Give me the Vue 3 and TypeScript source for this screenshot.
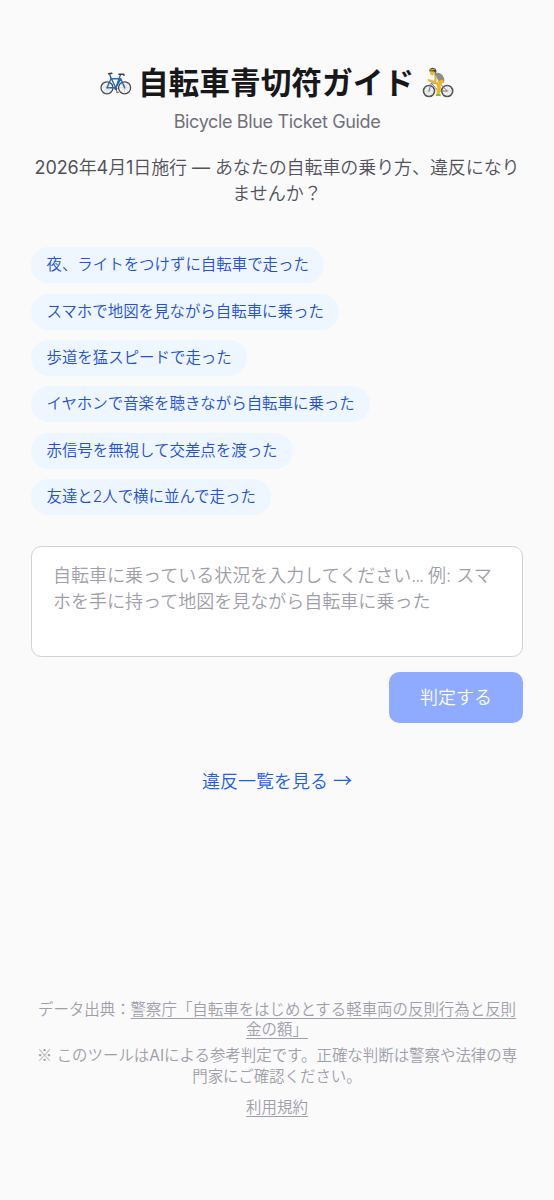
<script setup lang="ts">
const examples: string[] = [
  '夜、ライトをつけずに自転車で走った',
  'スマホで地図を見ながら自転車に乗った',
  '歩道を猛スピードで走った',
  'イヤホンで音楽を聴きながら自転車に乗った',
  '赤信号を無視して交差点を渡った',
  '友達と2人で横に並んで走った',
]
</script>

<template>
  <main class="page">
    <header class="header">
      <h1 class="title">
        <svg class="bike" viewBox="0 0 32 32" fill="none" stroke-linecap="round" stroke-linejoin="round">
          <g stroke="#44484c" stroke-width="1.3">
            <circle cx="7" cy="20.8" r="6" />
            <circle cx="24.6" cy="20.8" r="6" />
          </g>
          <g stroke="#b4b7bb" stroke-width=".5">
            <path d="M7 15.5v10.6M1.7 20.8h10.6M3.3 17l7.4 7.6M3.3 24.6l7.4-7.6M24.6 15.5v10.6M19.3 20.8h10.6M20.9 17l7.4 7.6M20.9 24.6l7.4-7.6" />
          </g>
          <path d="M7 20.8l4-9h9.8L15.8 21 10.6 10M7 20.8h8.8l4.8-13.2M9.8 7.4l1.2 4.4M20.8 11.8l3.8 9" stroke="#2868bd" stroke-width="1.4" />
          <path d="M8.8 6.8l3-.6M19 7.2h4.4l.6 1" stroke="#393d45" stroke-width="1.6" />
          <circle cx="15.8" cy="21.6" r="1.6" fill="#555b62" />
          <path d="M15.8 21.6l1.4 3.6M16.6 25.4h1.8" stroke="#444" stroke-width=".8" />
        </svg>
        <span class="title-text">自転車青切符ガイド</span>
        <svg class="bike" viewBox="0 0 32 32" fill="none" stroke-linecap="round" stroke-linejoin="round">
          <g stroke="#505255" stroke-width="1.6">
            <circle cx="7" cy="24" r="5.5" />
            <circle cx="25.2" cy="24" r="5.5" />
          </g>
          <path d="M7 19v10M2 24h10M3.5 20.5l7 7M3.5 27.5l7-7M25.2 19v10M20.2 24h10M21.7 20.5l7 7M21.7 27.5l7-7" stroke="#b2b4b6" stroke-width=".5" />
          <path d="M7 24l2.4-8.2 8.8 1 7 7.2h-9L9.6 16.4" stroke="#787b80" stroke-width="1" />
          <path d="M12.4 6.4c3.6-1.6 7.6-.2 9.4 4 .8 2 .8 4.6-.4 5.2l-4.6-.8-2-4-2 .2z" fill="#8b8e91" />
          <path d="M19.8 14.6l-3.8 1.8 1.2 4.2-1 5" stroke="#f3b817" stroke-width="3.6" />
          <path d="M13.8 9.8l-.6 5.2-6.6-1.8" stroke="#edb22b" stroke-width="2.2" />
          <path d="M14.8 28h3" stroke="#86b832" stroke-width="2.2" />
          <ellipse cx="10.4" cy="5.6" rx="2.5" ry="3" fill="#efbb38" />
          <path d="M7 4.2c.2-4.4 7-4.8 7.6 0l-1 2.4-1.4-2.2z" fill="#48494c" />
          <path d="M8.2 3.1l4.2-.9" stroke="#e5c22b" stroke-width="1" />
        </svg>
      </h1>
      <p class="subtitle">Bicycle Blue Ticket Guide</p>
      <p class="lead"><span class="lead-first"><span class="num">2026</span>年<span class="num">4</span>月<span class="num">1</span>日施行<span class="num"> — </span>あなたの自転車の乗り方、違反になり</span><br>ませんか？</p>
    </header>

    <div class="examples">
      <button v-for="item in examples" :key="item" class="chip" type="button">{{ item }}</button>
    </div>

    <form class="form" @submit.prevent>
      <div class="field">自転車に乗っている状況を入力してください<span class="dots">...</span> 例: スマ<br>ホを手に持って地図を見ながら自転車に乗った</div>
      <button class="submit" type="submit" disabled>判定する</button>
    </form>

    <a class="list-link">違反一覧を見る <span class="arrow">→</span></a>

    <footer class="footer">
      <p>データ出典：<a>警察庁「自転車をはじめとする軽車両の反則行為と反則<br>金の額」</a></p>
      <p class="note"><span class="mark">※</span> このツールは<span class="num">AI</span>による参考判定です。正確な判断は警察や法律の専<br>門家にご確認ください。</p>
      <p class="terms"><a>利用規約</a></p>
    </footer>
  </main>
</template>

<style>
body {
  background: #fafafa;
}
</style>

<style scoped>
.page {
  box-sizing: border-box;
  width: 554px;
  height: 1200px;
  padding: 62px 31px 0;
  display: flex;
  flex-direction: column;
  background: #fafafa;
  color: #18181b;
  font-family: Inter, "Noto Sans CJK JP", sans-serif;
  font-size: 18.03px;
  font-weight: 350;
  line-height: 25.76px;
}
.header {
  text-align: center;
}
.title {
  display: flex;
  justify-content: center;
  align-items: center;
  gap: 7px;
  height: 41px;
  margin: 0;
  font-size: 30.7px;
  font-weight: 700;
  line-height: 41px;
  white-space: nowrap;
}
.title-text {
  margin: 0 1px 0 -1px;
}
.bike {
  width: 32px;
  height: 32px;
  flex: none;
}
.num {
  font-weight: 400;
}
.subtitle {
  margin: 6px 0 0;
  color: #71717b;
  font-weight: 400;
  letter-spacing: -0.36px;
  white-space: nowrap;
}
.lead {
  margin: 20px -10px 0;
  color: #52525c;
  white-space: nowrap;
}
.lead-first {
  letter-spacing: -0.1px;
}
.examples {
  display: flex;
  flex-direction: column;
  align-items: flex-start;
  gap: 10.3px;
  margin-top: 41px;
}
.chip {
  height: 36.06px;
  padding: 0 15.45px;
  border: 0;
  border-radius: 19px;
  background: #eef6ff;
  color: #2450d8;
  font: 350 15.45px/36px Inter, "Noto Sans CJK JP", sans-serif;
  white-space: nowrap;
}
.form {
  display: flex;
  flex-direction: column;
  margin-top: 31px;
}
.field {
  box-sizing: border-box;
  height: 110.8px;
  padding: 15.8px 21px;
  border: 1.5px solid #d1d1d6;
  border-radius: 10.3px;
  background: #fff;
  color: #9f9fa9;
  line-height: 26px;
  white-space: nowrap;
}
.dots {
  letter-spacing: -1.2px;
}
.submit {
  align-self: flex-end;
  width: 134px;
  height: 51.5px;
  margin-top: 15px;
  padding: 0;
  border: 0;
  border-radius: 10.3px;
  background: #8eabff;
  color: #fbfcff;
  font: 350 18.03px/51px Inter, "Noto Sans CJK JP", sans-serif;
}
.list-link {
  align-self: center;
  margin-top: 45.6px;
  color: #1c5fee;
  white-space: nowrap;
}
.arrow {
  font-family: "Noto Sans CJK JP", sans-serif;
  font-size: 19px;
  line-height: 1;
}
.footer {
  margin-top: 205px;
  color: #9f9fa9;
  font-size: 15.45px;
  line-height: 20.6px;
  text-align: center;
  white-space: nowrap;
}
.footer p {
  margin: 0;
}
.footer a {
  text-decoration: underline;
  text-decoration-thickness: 1px;
  text-underline-offset: 2.6px;
}
.footer .note {
  margin-top: 5.2px;
}
.footer .mark {
  font-family: "Noto Sans CJK JP", sans-serif;
  line-height: 1;
}
.footer .terms {
  margin-top: 10.3px;
}
</style>
